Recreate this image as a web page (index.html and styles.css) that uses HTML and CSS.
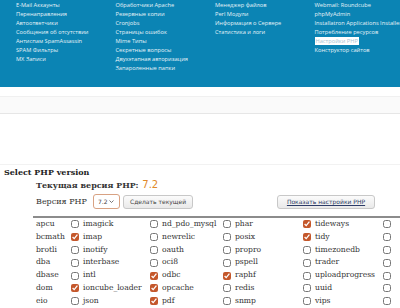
FILE: index.html
```html
<!DOCTYPE html>
<html lang="ru">
<head>
  <meta charset="UTF-8" />
  <title>Select PHP version</title>
  <link rel="stylesheet" href="styles.css">
</head>
<body>

  <!-- === Top menu (blue) === -->
  <div class="topmenu">
    <ul class="menu-col">
      <li>E-Mail Аккаунты</li>
      <li>Перенаправления</li>
      <li>Автоответчики</li>
      <li>Сообщения об отсутствии</li>
      <li>Антиспам SpamAssassin</li>
      <li>SPAM Фильтры</li>
      <li>MX Записи</li>
    </ul>
    <ul class="menu-col">
      <li>Обработчики Apache</li>
      <li>Резервные копии</li>
      <li>Cronjobs</li>
      <li>Страницы ошибок</li>
      <li>Mime Типы</li>
      <li>Секретные вопросы</li>
      <li>Двухэтапная авторизация</li>
      <li>Запароленные папки</li>
    </ul>
    <ul class="menu-col">
      <li>Менеджер файлов</li>
      <li>Perl Модули</li>
      <li>Информация о Сервере</li>
      <li>Статистика и логи</li>
    </ul>
    <ul class="menu-col">
      <li>Webmail: Roundcube</li>
      <li>phpMyAdmin</li>
      <li>Installatron Applications Installer</li>
      <li>Потребление ресурсов</li>
      <li><span class="active">Настройки PHP</span></li>
      <li>Конструктор сайтов</li>
    </ul>
  </div>

  <div class="subbar"></div>
  <div class="spacer"></div>

  <!-- === PHP selector === -->
  <div class="selector">
    <h3>Select PHP version</h3>
    <div class="php-box">
      <div class="current">Текущая версия PHP: <span class="ver">7.2</span></div>

      <div class="form-row">
        <span class="label">Версия PHP</span>
        <span class="select-wrap">
          <select class="ver-select">
            <option>7.2</option>
          </select>
          <svg class="chev" width="5" height="3" viewBox="0 0 5 3"><path d="M0.5 0.5 L2.5 2.5 L4.5 0.5" fill="none" stroke="#555" stroke-width="0.8"/></svg>
        </span>
        <button class="btn">Сделать текущей</button>
        <button class="btn btn-link">Показать настройки PHP</button>
      </div>

      <table class="ext-table">
        <colgroup>
          <col class="c0"><col class="c1"><col class="c2">
          <col class="c3"><col class="c4"><col class="c5">
        </colgroup>
        <tr>
          <td>apcu</td>
          <td><label><input type="checkbox"> imagick</label></td>
          <td><label><input type="checkbox"> nd_pdo_mysql</label></td>
          <td><label><input type="checkbox"> phar</label></td>
          <td><label><input type="checkbox" checked> tideways</label></td>
          <td><label><input type="checkbox"></label></td>
        </tr>
        <tr>
          <td>bcmath</td>
          <td><label><input type="checkbox" checked> imap</label></td>
          <td><label><input type="checkbox"> newrelic</label></td>
          <td><label><input type="checkbox"> posix</label></td>
          <td><label><input type="checkbox" checked> tidy</label></td>
          <td><label><input type="checkbox"></label></td>
        </tr>
        <tr>
          <td>brotli</td>
          <td><label><input type="checkbox"> inotify</label></td>
          <td><label><input type="checkbox"> oauth</label></td>
          <td><label><input type="checkbox"> propro</label></td>
          <td><label><input type="checkbox"> timezonedb</label></td>
          <td><label><input type="checkbox"></label></td>
        </tr>
        <tr>
          <td>dba</td>
          <td><label><input type="checkbox"> interbase</label></td>
          <td><label><input type="checkbox"> oci8</label></td>
          <td><label><input type="checkbox"> pspell</label></td>
          <td><label><input type="checkbox"> trader</label></td>
          <td><label><input type="checkbox"></label></td>
        </tr>
        <tr>
          <td>dbase</td>
          <td><label><input type="checkbox"> intl</label></td>
          <td><label><input type="checkbox" checked> odbc</label></td>
          <td><label><input type="checkbox" checked> raphf</label></td>
          <td><label><input type="checkbox"> uploadprogress</label></td>
          <td><label><input type="checkbox"></label></td>
        </tr>
        <tr>
          <td>dom</td>
          <td><label><input type="checkbox" checked> ioncube_loader</label></td>
          <td><label><input type="checkbox" checked> opcache</label></td>
          <td><label><input type="checkbox"> redis</label></td>
          <td><label><input type="checkbox"> uuid</label></td>
          <td><label><input type="checkbox"></label></td>
        </tr>
        <tr>
          <td>eio</td>
          <td><label><input type="checkbox"> json</label></td>
          <td><label><input type="checkbox" checked> pdf</label></td>
          <td><label><input type="checkbox"> snmp</label></td>
          <td><label><input type="checkbox"> vips</label></td>
          <td><label><input type="checkbox"></label></td>
        </tr>
      </table>
    </div>
  </div>

</body>
</html>
```

FILE: styles.css
```css
/* Basic resets */
* { margin: 0; padding: 0; box-sizing: border-box; }
body {
  background: #fff;
  color: #333;
  font-family: "DejaVu Serif", serif;
  width: 400px;
  overflow: hidden;
}

/* === Top menu === */
.topmenu {
  display: flex;
  height: 87px;
  padding: 1px 0 0 16px;
  background: #0b84b4;
}
.menu-col {
  list-style: none;
  width: 99.5px;
  flex-shrink: 0;
}
.menu-col:last-child { width: 86px; }
.menu-col li {
  font-family: "Open Sans", sans-serif;
  font-size: 5.7px;
  line-height: 9px;
  height: 9px;
  color: #e4f2f8;
  white-space: nowrap;
}
.menu-col .active {
  background: #fff;
  color: #a9c3d3;
  padding: 0 1px;
}

/* Grey bar under the menu */
.subbar {
  margin-top: 9px;
  height: 18px;
  background: #fafafa;
  border-top: 1px solid #f0f0f0;
  border-bottom: 1px solid #e6e6e6;
}
.spacer {
  height: 51px;
  border-bottom: 1px solid #f2f2f2;
}

/* === PHP selector === */
.selector h3 {
  font-size: 8px;
  line-height: 12px;
  padding: 1px 0 0 4px;
  color: #222;
}
.php-box {
  padding-left: 35px;
}
.current {
  font-weight: bold;
  font-size: 8px;
  line-height: 14px;
  padding-left: 1px;
  color: #333;
}
.current .ver {
  font-family: "DejaVu Sans", sans-serif;
  font-weight: normal;
  font-size: 10px;
  color: #e08a2a;
  margin-left: 1px;
}

.form-row {
  display: flex;
  align-items: center;
  height: 19px;
  padding-left: 1px;
  padding-right: 25px;
  width: 365px;
}
.form-row .label {
  font-size: 8px;
  width: 57px;
}
.select-wrap {
  position: relative;
  display: flex;
  align-items: center;
}
.ver-select {
  appearance: none;
  width: 27px;
  height: 15px;
  font-family: "DejaVu Sans", sans-serif;
  font-size: 6px;
  color: #444;
  border: 1px solid #d8a283;
  border-radius: 3px;
  background: #fff;
  padding-left: 4px;
}
.chev {
  position: absolute;
  right: 6px;
  top: 6px;
}
.btn {
  height: 14px;
  margin-left: 3px;
  padding: 0 6px;
  font-family: "DejaVu Sans", sans-serif;
  font-size: 6px;
  color: #444;
  background: linear-gradient(#fbfbfb, #e9e9e9);
  border: 1px solid #c8c8c8;
  border-radius: 3px;
}
.btn-link {
  margin-left: auto;
  width: 98px;
  color: #2b3a66;
  text-decoration: underline;
}

/* Extensions table */
.ext-table {
  margin-top: 5px;
  margin-left: -2px;
  border-collapse: collapse;
  border-top: 2px solid #8c8c8c;
  table-layout: fixed;
  width: 440px;
}
.ext-table .c0 { width: 38px; }
.ext-table .c1 { width: 79px; }
.ext-table .c2 { width: 73px; }
.ext-table .c3 { width: 80px; }
.ext-table .c4 { width: 80px; }
.ext-table .c5 { width: 90px; }
.ext-table td {
  font-size: 7.6px;
  height: 12.8px;
  line-height: 12.8px;
  white-space: nowrap;
  color: #333;
}
.ext-table td:first-child { padding-left: 3px; }
.ext-table label {
  display: flex;
  align-items: center;
  gap: 4px;
}
.ext-table input {
  width: 8px;
  height: 8px;
  accent-color: #c4572b;
}
```
